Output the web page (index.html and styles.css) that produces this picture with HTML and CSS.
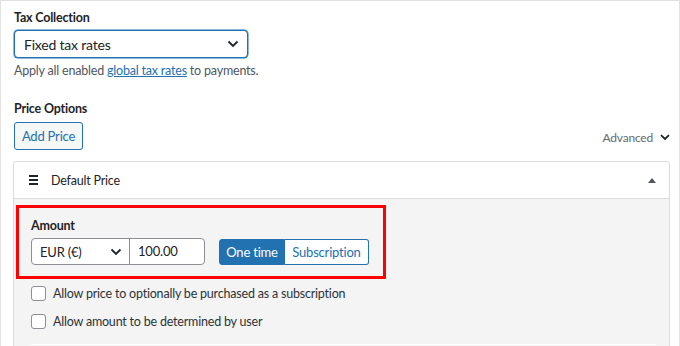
FILE: index.html
```html
<!DOCTYPE html>
<html>
<head>
    <title>Price Options</title>
    <link rel="stylesheet" href="styles.css">
</head>
<body>
    <div class="page">
        <div class="field">
            <label class="field-label" for="taxCollection">Tax Collection</label>
            <div class="select-box tax-select">
                <span>Fixed tax rates</span>
                <svg class="chevron" width="12" height="8" viewBox="0 0 12 8"><path d="M1.5 1.5 6 6l4.5-4.5" fill="none" stroke="#1d2327" stroke-width="1.8"/></svg>
            </div>
            <p class="help">Apply all enabled <a href="#">global tax rates</a> to payments.</p>
        </div>

        <div class="field price-options">
            <div class="field-label">Price Options</div>
            <div class="options-row">
                <button class="add-price">Add Price</button>
                <div class="advanced">
                    <span>Advanced</span>
                    <svg width="10" height="7" viewBox="0 0 10 7"><path d="M1 1.2 5 5l4-3.8" fill="none" stroke="#1d2327" stroke-width="1.8"/></svg>
                </div>
            </div>
        </div>

        <div class="price-panel">
            <div class="panel-header">
                <span class="drag-handle">
                    <i></i><i></i><i></i>
                </span>
                <span class="panel-title">Default Price</span>
                <span class="toggle-arrow"></span>
            </div>
            <div class="panel-body">
                <div class="amount-box">
                    <div class="field-label">Amount</div>
                    <div class="amount-row">
                        <div class="currency">
                            <div class="select-box currency-select">
                                <span>EUR (&euro;)</span>
                                <svg class="chevron" width="12" height="8" viewBox="0 0 12 8"><path d="M1.5 1.5 6 6l4.5-4.5" fill="none" stroke="#1d2327" stroke-width="1.8"/></svg>
                            </div>
                            <div class="amount-input">100.00</div>
                        </div>
                        <div class="recurring">
                            <span class="recurring-btn active">One time</span>
                            <span class="recurring-btn sub">Subscription</span>
                        </div>
                    </div>
                </div>

                <label class="check-row"><span class="check"></span>Allow price to optionally be purchased as a subscription</label>
                <label class="check-row"><span class="check"></span>Allow amount to be determined by user</label>
                <div class="divider"></div>
            </div>
        </div>
    </div>
</body>
</html>
```

FILE: styles.css
```css
body {
    margin: 0;
    background-color: #fff;
    font-family: Lato, "Liberation Sans", sans-serif;
    font-size: 12.5px;
    letter-spacing: -0.2px;
    color: #1d2327;
}

.page {
    box-sizing: border-box;
    width: 680px;
    height: 346px;
    overflow: hidden;
    border: 1px solid #e2e2e2;
    border-bottom: none;
    padding: 9px 10px 0 13px;
}

.field-label {
    display: block;
    font-weight: bold;
    font-size: 12.5px;
    line-height: 16px;
}

.select-box {
    box-sizing: border-box;
    display: flex;
    align-items: center;
    justify-content: space-between;
    background-color: #fff;
    font-size: 14px;
}

.tax-select {
    width: 234px;
    height: 28px;
    margin-top: 4px;
    padding: 0 8px 0 9px;
    border: 1px solid #2271b1;
    border-radius: 4px;
    box-shadow: 0 0 0 0.5px #2271b1;
}

.help {
    margin: 4px 0 0;
    line-height: 18px;
    color: #50575e;
}

.help a {
    color: #2271b1;
}

.price-options {
    margin-top: 21px;
}

.options-row {
    display: flex;
    align-items: center;
    justify-content: space-between;
    margin-top: 5px;
}

.add-price {
    box-sizing: border-box;
    width: 69px;
    height: 28px;
    padding: 0;
    background-color: #f6f7f7;
    border: 1px solid #2271b1;
    border-radius: 3px;
    color: #2271b1;
    font-family: inherit;
    font-size: 13px;
    letter-spacing: inherit;
}

.advanced {
    display: flex;
    align-items: center;
    gap: 7px;
    margin-top: 3px;
    margin-right: -1px;
    color: #646970;
    font-size: 12px;
}

.price-panel {
    margin: 11px 0 0 -1px;
    width: 657px;
    box-sizing: border-box;
    border: 1px solid #dcdcde;
    border-radius: 3px;
    background-color: #f4f4f4;
    height: 200px;
}

.panel-header {
    display: flex;
    align-items: center;
    height: 36px;
    padding: 0 13px 0 15px;
    background-color: #fff;
    border-bottom: 1px solid #dcdcde;
    border-radius: 3px 3px 0 0;
}

.drag-handle {
    display: flex;
    flex-direction: column;
    gap: 2px;
    width: 9px;
    margin-top: -1px;
}

.drag-handle i {
    display: block;
    height: 2px;
    background-color: #1d2327;
}

.panel-title {
    margin-left: 13px;
    font-size: 12.5px;
}

.toggle-arrow {
    margin-left: auto;
    width: 0;
    height: 0;
    border-left: 4px solid transparent;
    border-right: 4px solid transparent;
    border-bottom: 5px solid #50575e;
}

.panel-body {
    padding: 6px 0 0 2px;
}

.amount-box {
    width: 370px;
    box-sizing: border-box;
    border: 3px solid #ff0000;
    padding: 10px 12px 11px;
}

.amount-row {
    display: flex;
    align-items: center;
    gap: 14px;
    margin-top: 4px;
}

.currency {
    display: flex;
}

.currency-select {
    width: 99px;
    height: 27px;
    padding: 0 7px 0 8px;
    border: 1px solid #8c8f94;
    border-radius: 4px 0 0 4px;
    font-size: 13px;
}

.amount-input {
    box-sizing: border-box;
    width: 76px;
    height: 27px;
    margin-left: -1px;
    padding: 0 8px;
    line-height: 25px;
    font-size: 13px;
    background-color: #fff;
    border: 1px solid #8c8f94;
    border-radius: 0 4px 4px 0;
}

.recurring {
    display: flex;
}

.recurring-btn {
    box-sizing: border-box;
    width: 66px;
    height: 26px;
    line-height: 24px;
    text-align: center;
    white-space: nowrap;
    border: 1px solid #2271b1;
    background-color: #fff;
    color: #2271b1;
    font-size: 13px;
}

.recurring-btn:first-child {
    border-radius: 3px 0 0 3px;
}

.recurring-btn.sub {
    width: 84px;
    border-radius: 0 3px 3px 0;
    border-left: none;
}

.recurring-btn.active {
    background-color: #2271b1;
    color: #fff;
}

.check-row {
    display: flex;
    align-items: center;
    gap: 7px;
    height: 16px;
    margin: 6px 0 0 15px;
    color: #2c3338;
}

.check-row + .check-row {
    margin-top: 12px;
}

.check {
    box-sizing: border-box;
    width: 15px;
    height: 15px;
    border: 1px solid #8c8f94;
    border-radius: 3px;
    background-color: #fff;
}

.divider {
    margin: 15px 13px 0 15px;
    height: 1px;
    background-color: #fff;
}
```
